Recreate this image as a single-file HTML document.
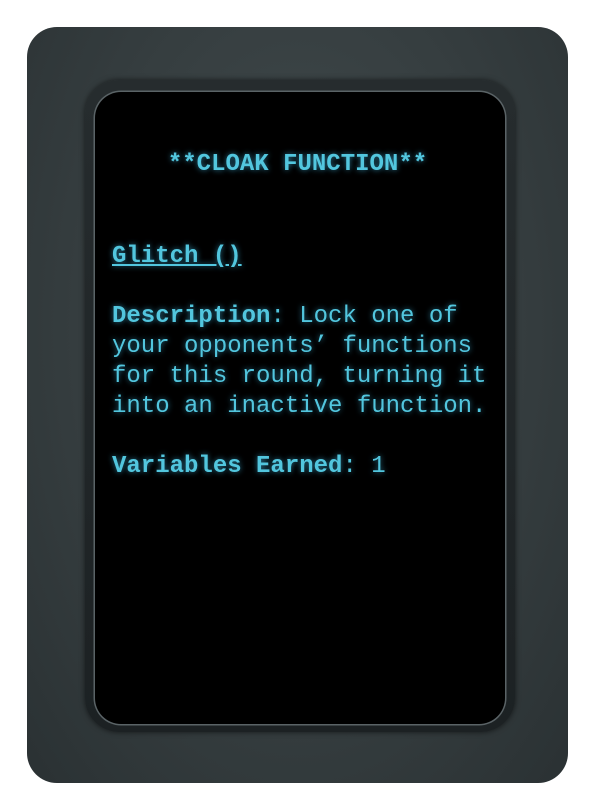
<!DOCTYPE html>
<html><head><style>
html,body{margin:0;padding:0;background:#fff;width:595px;height:811px;overflow:hidden}
.card{position:absolute;left:27px;top:27px;width:541px;height:756px;border-radius:30px;
background:radial-gradient(ellipse at 50% 40%,#434c4e 0%,#363e40 55%,#2a3133 100%)}
.bezel{position:absolute;left:85px;top:80px;width:430px;height:652px;border-radius:34px;
background:linear-gradient(#262c2e,#1c2123);box-shadow:0 0 6px rgba(0,0,0,.6)}
.screen{position:absolute;left:95px;top:92px;width:410px;height:632px;border-radius:26px;background:#000;
box-shadow:0 0 0 1.5px #5a6366}
.t{position:absolute;font-family:"Liberation Mono",monospace;font-size:24px;color:#52c6de;
text-shadow:0 0 6px rgba(60,170,210,.7);white-space:pre;line-height:30px}
b{font-weight:bold}
</style></head><body>
<div class="card"></div>
<div class="bezel"></div>
<div class="screen"></div>
<div class="t" style="left:0;width:595px;text-align:center;top:150px"><b>**CLOAK FUNCTION**</b></div>
<div class="t" style="left:112px;top:242px"><b style="text-decoration:underline">Glitch ()</b></div>
<div class="t" style="left:112px;top:302px"><b>Description</b>: Lock one of
your opponents’ functions
for this round, turning it
into an inactive function.

<b>Variables Earned</b>: 1</div>
</body></html>
